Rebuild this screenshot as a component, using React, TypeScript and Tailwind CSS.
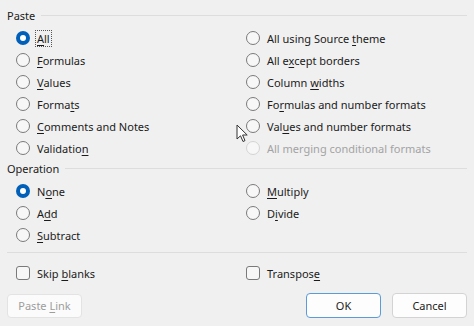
import type { ReactNode } from 'react'

// access-key label: underline one letter
function Key({ text, k }: { text: string; k: number }) {
  return (
    <>
      {text.slice(0, k)}
      <span className="underline underline-offset-[2px]">{text[k]}</span>
      {text.slice(k + 1)}
    </>
  )
}

function Radio({ checked, disabled, children }: { checked?: boolean; disabled?: boolean; children: ReactNode }) {
  return (
    <div className="flex h-[22px] items-center">
      {checked ? (
        <span className="flex h-[14px] w-[14px] items-center justify-center rounded-full bg-[#005fb8]">
          <span className="h-[6px] w-[6px] rounded-full bg-white" />
        </span>
      ) : (
        <span
          className={`h-[14px] w-[14px] rounded-full border bg-[#f7f7f7] ${
            disabled ? 'border-[#d4d4d4]' : 'border-[#7a7a7a]'
          }`}
        />
      )}
      <span className={`ml-[7px] ${disabled ? 'text-[#a3a3a3]' : 'text-[#1b1b1b]'}`}>{children}</span>
    </div>
  )
}

function Check({ children }: { children: ReactNode }) {
  return (
    <div className="flex h-[22px] items-center">
      <span className="h-[14px] w-[14px] rounded-[3px] border border-[#7a7a7a] bg-[#f7f7f7]" />
      <span className="ml-[7px]">{children}</span>
    </div>
  )
}

function Header({ label }: { label: string }) {
  return (
    <div className="flex h-[18px] items-center px-[7px]">
      <span>{label}</span>
      <span className="ml-[6px] h-px flex-1 bg-[#dddddd]" />
    </div>
  )
}

export default function App() {
  return (
    <div
      className="relative h-[326px] w-[474px] overflow-hidden bg-[#f0f0f0] text-[11px] leading-none text-[#1b1b1b]"
      style={{ fontFamily: '"Noto Sans", "Open Sans", sans-serif' }}
    >
      <div className="pt-[6px]">
        <Header label="Paste" />
        <div className="mt-[3px] grid grid-cols-[230px_1fr] pl-[16px]">
          <div className="flex flex-col">
            <div className="flex h-[22px] items-center">
              <span className="flex h-[14px] w-[14px] items-center justify-center rounded-full bg-[#005fb8]">
                <span className="h-[6px] w-[6px] rounded-full bg-white" />
              </span>
              <span className="ml-[5px] border border-dotted border-[#555] px-px py-[2px]">
                <Key text="All" k={0} />
              </span>
            </div>
            <Radio><Key text="Formulas" k={0} /></Radio>
            <Radio><Key text="Values" k={0} /></Radio>
            <Radio><Key text="Formats" k={5} /></Radio>
            <Radio><Key text="Comments and Notes" k={0} /></Radio>
            <Radio><Key text="Validation" k={9} /></Radio>
          </div>
          <div className="flex flex-col">
            <Radio><Key text="All using Source theme" k={17} /></Radio>
            <Radio><Key text="All except borders" k={5} /></Radio>
            <Radio><Key text="Column widths" k={7} /></Radio>
            <Radio><Key text="Formulas and number formats" k={2} /></Radio>
            <Radio><Key text="Values and number formats" k={3} /></Radio>
            <Radio disabled>All merging conditional formats</Radio>
          </div>
        </div>

        <Header label="Operation" />
        <div className="mt-[3px] grid grid-cols-[230px_1fr] pl-[16px]">
          <div className="flex flex-col">
            <Radio checked><Key text="None" k={1} /></Radio>
            <Radio><Key text="Add" k={1} /></Radio>
            <Radio><Key text="Subtract" k={0} /></Radio>
          </div>
          <div className="flex flex-col">
            <Radio><Key text="Multiply" k={0} /></Radio>
            <Radio><Key text="Divide" k={1} /></Radio>
          </div>
        </div>

        <div className="mx-[7px] mt-[6px] h-px bg-[#dddddd]" />

        <div className="mt-[9px] grid grid-cols-[230px_1fr] pl-[16px]">
          <Check><Key text="Skip blanks" k={5} /></Check>
          <Check><Key text="Transpose" k={8} /></Check>
        </div>

        <div className="mt-[9px] flex items-center px-[7px]">
          <button className="h-[24px] w-[75px] rounded-[4px] border border-[#e3e3e3] bg-[#fbfbfb] text-[#9d9d9d]">
            Paste <Key text="Link" k={0} />
          </button>
          <button className="ml-auto h-[25px] w-[75px] rounded-[4px] border border-[#5a9bd8] bg-[#fdfdfd]">OK</button>
          <button className="ml-[11px] h-[25px] w-[75px] rounded-[4px] border border-[#d3d3d3] bg-[#fdfdfd]">Cancel</button>
        </div>
      </div>

      {/* mouse pointer over the dialog */}
      <svg className="absolute left-[236px] top-[124px]" width="13" height="20" viewBox="0 0 13 20">
        <path d="M1 1 L1 15 L4.5 11.8 L7 17.5 L9 16.6 L6.6 11 L11.2 11 Z" fill="#fff" stroke="#333" strokeWidth="1" strokeLinejoin="round" />
      </svg>
    </div>
  )
}
